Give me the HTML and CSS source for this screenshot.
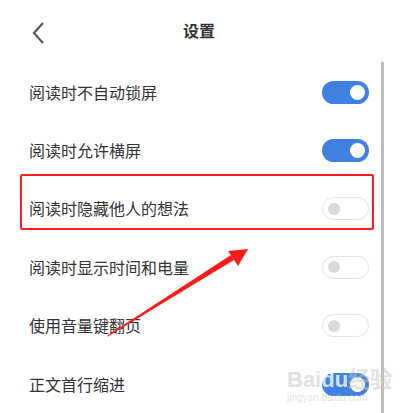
FILE: index.html
```html
<!DOCTYPE html>
<html lang="zh-CN">
<head>
    <meta charset="UTF-8">
    <meta name="viewport" content="width=device-width, initial-scale=1.0">
    <title>设置</title>
    <link rel="stylesheet" href="styles.css">
</head>
<body>
    <div class="page">
        <div class="header">
            <svg class="back" width="14" height="24" viewBox="0 0 14 24">
                <path d="M11 2 L2 12 L11 22" fill="none" stroke="#555a60" stroke-width="2.2"/>
            </svg>
            <div class="title">设置</div>
        </div>

        <div class="body">
            <div class="list">
                <div class="row">
                    <span class="label">阅读时不自动锁屏</span>
                    <span class="switch on"><i></i></span>
                </div>
                <div class="row">
                    <span class="label">阅读时允许横屏</span>
                    <span class="switch on"><i></i></span>
                </div>
                <div class="row">
                    <span class="label">阅读时隐藏他人的想法</span>
                    <span class="switch"><i></i></span>
                </div>
                <div class="row">
                    <span class="label">阅读时显示时间和电量</span>
                    <span class="switch"><i></i></span>
                </div>
                <div class="row">
                    <span class="label">使用音量键翻页</span>
                    <span class="switch"><i></i></span>
                </div>
                <div class="row">
                    <span class="label">正文首行缩进</span>
                    <span class="switch on"><i></i></span>
                </div>
            </div>
            <div class="scrollbar"></div>
        </div>

        <!-- 标注：红框和箭头 -->
        <div class="mark-box"></div>
        <svg class="mark-arrow" width="405" height="413" viewBox="0 0 405 413">
            <polygon points="107,337 108,335 231,255 234,260" fill="#ff1a1a"/>
            <polygon points="228,251 248,249 238,266" fill="#ff1a1a"/>
        </svg>

        <div class="watermark">
            <span class="wm-top">Bai<b>du</b>经验</span>
            <span class="wm-bottom">jingyan.baidu.com</span>
        </div>
    </div>
</body>
</html>
```

FILE: styles.css
```css
body {
    margin: 0;
    background: #fff;
    font-family: "Noto Sans CJK SC", "Noto Sans", sans-serif;
    color: #333;
}
.page {
    position: relative;
    width: 405px;
    height: 413px;
    overflow: hidden;
}
.header {
    height: 62px;
    display: flex;
    align-items: center;
    justify-content: center;
    position: relative;
}
.back {
    position: absolute;
    left: 32px;
    top: 21px;
}
.title {
    font-size: 16px;
    font-weight: bold;
    color: #333;
    margin-top: -3px;
    margin-right: 7px;
}
.body {
    display: flex;
}
.list {
    flex: 1;
    padding-left: 29px;
    padding-right: 12px;
    padding-top: 1px;
}
.row {
    height: 58.4px;
    display: flex;
    align-items: center;
    justify-content: space-between;
}
.label {
    font-size: 16px;
    color: #333;
    margin-top: -1px;
}
.scrollbar {
    width: 3px;
    height: 360px;
    background: #bdbdbd;
    margin-right: 21px;
}
.switch {
    width: 47px;
    height: 23px;
    box-sizing: border-box;
    border-radius: 12px;
    border: 1.5px solid #e2e2e2;
    background: #fff;
    display: flex;
    align-items: center;
    padding: 0 5px;
}
.switch i {
    width: 12px;
    height: 12px;
    border-radius: 50%;
    background: #dadada;
}
.switch.on {
    border: none;
    background: #3f80e0;
    justify-content: flex-end;
    padding: 0 4px;
}
.switch.on i {
    width: 15px;
    height: 15px;
    background: #fff;
}
.mark-box {
    position: absolute;
    left: 20px;
    top: 174px;
    width: 350px;
    height: 52px;
    border: 2.5px solid #ff1f1f;
    border-radius: 2px;
}
.mark-arrow {
    position: absolute;
    left: 0;
    top: 0;
}
.watermark {
    position: absolute;
    left: 287px;
    top: 368px;
    display: flex;
    flex-direction: column;
    color: rgba(200, 200, 200, 0.55);
    font-family: "Liberation Sans", Arial, sans-serif;
}
.wm-top {
    font-size: 22px;
    font-weight: bold;
    line-height: 24px;
}
.wm-top b {
    color: rgba(255, 255, 255, 0.8);
}
.wm-bottom {
    font-size: 10px;
    line-height: 12px;
}
```
